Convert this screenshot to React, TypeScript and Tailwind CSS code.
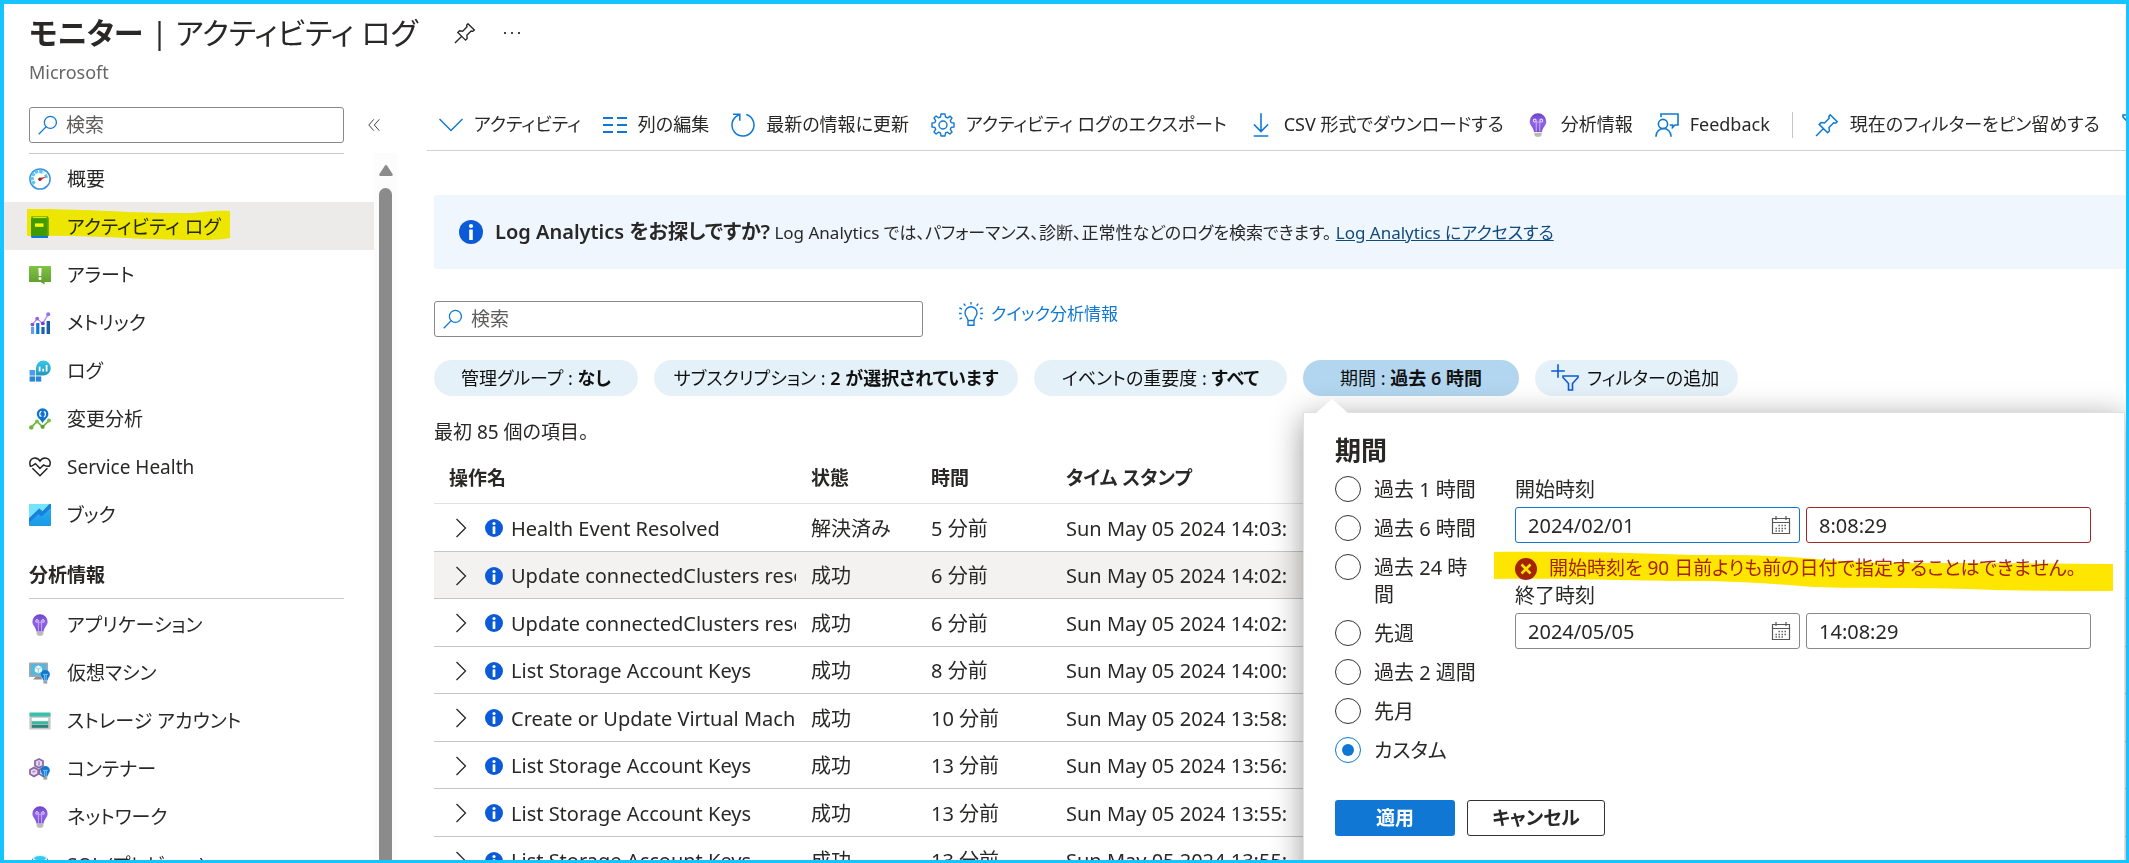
import React from "react";

type IconProps = { className?: string };

const stroke = { fill: "none", stroke: "currentColor", strokeLinecap: "square" as const };

const PinIcon = ({ className }: IconProps) => (
  <svg viewBox="0 0 24 24" className={className} {...stroke} strokeWidth="1.5" aria-hidden="true">
    <path d="M15.2 1.8 L22.2 8.8 L20.6 10.2 L18.7 9.8 L14 14.5 L14.4 18 L12.6 19.8 L4.2 11.4 L6 9.6 L9.5 10 L14.2 5.3 L13.8 3.4 Z M8.2 15.8 L1.6 22.4" />
  </svg>
);

const SearchIcon = ({ className }: IconProps) => (
  <svg viewBox="0 0 20 20" className={className} {...stroke} strokeWidth="1.3" aria-hidden="true">
    <circle cx="12.4" cy="7.4" r="6" />
    <path d="M8 11.8 L1.2 18.8" />
  </svg>
);

const CollapseIcon = ({ className }: IconProps) => (
  <svg viewBox="0 0 12 12" className={className} {...stroke} strokeWidth="1" aria-hidden="true">
    <path d="M5.5 0.7 L0.8 6 L5.5 11.3 M11 0.7 L6.3 6 L11 11.3" />
  </svg>
);

const ChevronDown = ({ className }: IconProps) => (
  <svg viewBox="0 0 24 24" className={className} {...stroke} strokeWidth="1.5" aria-hidden="true">
    <path d="M1 6.5 L12 17.5 L23 6.5" />
  </svg>
);

const ColumnsIcon = ({ className }: IconProps) => (
  <svg viewBox="0 0 24 24" className={className} fill="none" stroke="currentColor" strokeWidth="2" aria-hidden="true">
    <path d="M0 5H10M14 5H24M0 12H10M14 12H24M0 19H10M14 19H24" />
  </svg>
);

const RefreshIcon = ({ className }: IconProps) => (
  <svg viewBox="0 0 24 24" className={className} {...stroke} strokeWidth="1.5" aria-hidden="true">
    <path d="M7.5 2 A11 11 0 1 0 16 1.8 M2.8 1.2 H8.8 V7" />
  </svg>
);

const GearIcon = ({ className }: IconProps) => (
  <svg viewBox="0 0 24 24" className={className} fill="none" stroke="currentColor" strokeWidth="1.4" strokeLinejoin="round" aria-hidden="true">
    <path d="M10 1 H14 L14.5 4 L16.6 4.9 L19.2 3.2 L21 5.2 L19.3 7.6 L20.1 9.6 L23 10 V14 L20.1 14.4 L19.3 16.4 L21 18.9 L18.9 21 L16.5 19.2 L14.5 20 L14 23 H10 L9.5 20 L7.5 19.2 L5.1 21 L3 18.9 L4.7 16.4 L3.9 14.4 L1 14 V10 L3.9 9.6 L4.7 7.6 L3 5.1 L5.1 3 L7.5 4.8 L9.5 4 Z" />
    <circle cx="12" cy="12" r="4" />
  </svg>
);

const DownloadIcon = ({ className }: IconProps) => (
  <svg viewBox="0 0 24 24" className={className} {...stroke} strokeWidth="1.6" aria-hidden="true">
    <path d="M12 1 V18 M5.5 12 L12 18.5 L18.5 12 M5.5 23 H18.5" />
  </svg>
);

const FeedbackIcon = ({ className }: IconProps) => (
  <svg viewBox="0 0 24 24" className={className} {...stroke} strokeWidth="1.6" aria-hidden="true">
    <circle cx="8" cy="11" r="4.6" />
    <path d="M1 23 A7.5 7.5 0 0 1 16 23 M6 3.5 V1 H23 V12 H20 L17.5 14.5 V12 H15.5" />
  </svg>
);

const FilterIcon = ({ className }: IconProps) => (
  <svg viewBox="0 0 24 24" className={className} {...stroke} strokeWidth="1.6" aria-hidden="true">
    <path d="M1 2 H23 V4 L14.5 13 V22 H9.5 V13 L1 4 Z" />
  </svg>
);

const AddFilterIcon = ({ className }: IconProps) => (
  <svg viewBox="0 0 28 28" className={className} {...stroke} strokeWidth="1.6" aria-hidden="true">
    <path d="M7 1 V13 M1 7 H13" />
    <path d="M12 12 H27 V13.5 L21.5 19.5 V26 H17.5 V19.5 L12 13.5 Z" />
  </svg>
);

const IdeaIcon = ({ className }: IconProps) => (
  <svg viewBox="0 0 24 24" className={className} {...stroke} strokeWidth="1.4" aria-hidden="true">
    <path d="M9 18.5 C9 16 6 14.5 6 10.8 A6 6 0 0 1 18 10.8 C18 14.5 15 16 15 18.5 Z M9 18.5 V23.3 H15 V18.5 M12 0.6 V1.8 M5.2 2.2 L6 3.4 M18.8 2.2 L18 3.4 M1 6.2 L2.4 6.8 M23 6.2 L21.6 6.8 M0.7 11.5 H2 M23.3 11.5 H22 M1.2 16.8 L2.4 16.2 M22.8 16.8 L21.6 16.2" />
  </svg>
);

const ChevronRight = ({ className }: IconProps) => (
  <svg viewBox="0 0 12 20" className={className} fill="none" stroke="currentColor" strokeWidth="1.3" aria-hidden="true">
    <path d="M1.5 1 L10.5 10 L1.5 19" />
  </svg>
);

const InfoIcon = ({ className }: IconProps) => (
  <svg viewBox="0 0 24 24" className={className} aria-hidden="true">
    <circle cx="12" cy="12" r="12" fill="#0b5bd8" />
    <circle cx="12" cy="6" r="2.1" fill="#fff" />
    <rect x="10.2" y="9.6" width="3.6" height="10.4" rx="0.6" fill="#fff" />
  </svg>
);

const ErrorIcon = ({ className }: IconProps) => (
  <svg viewBox="0 0 22 22" className={className} aria-hidden="true">
    <circle cx="11" cy="11" r="11" fill="#a4262c" />
    <path d="M6.5 6.5 L15.5 15.5 M15.5 6.5 L6.5 15.5" stroke="#fff" strokeWidth="2.6" />
  </svg>
);

const CalendarIcon = ({ className }: IconProps) => (
  <svg viewBox="0 0 20 20" className={className} fill="none" stroke="currentColor" aria-hidden="true">
    <path d="M1.5 3.5 H18.5 V18.5 H1.5 Z M1.5 7.5 H18.5 M5 1 V5 M15 1 V5" strokeWidth="1.2" />
    <path d="M7.5 10.5 H16.5 M4.5 13.5 H16.5 M4.5 16 H13.5" strokeDasharray="1.4 1.6" strokeWidth="1.6" />
  </svg>
);

const BulbIcon = ({ className }: IconProps) => (
  <svg viewBox="0 0 22 22" className={className} aria-hidden="true">
    <defs>
      <linearGradient id="bulb" x1="0" y1="0" x2="0" y2="1">
        <stop offset="0" stopColor="#6a43c4" />
        <stop offset="0.5" stopColor="#9163e6" />
        <stop offset="1" stopColor="#7750d0" />
      </linearGradient>
    </defs>
    <path d="M11 0.3 A7.6 7.4 0 0 1 18.6 7.7 C18.6 11.5 15.2 12.8 14.6 17.4 H7.4 C6.8 12.8 3.4 11.5 3.4 7.7 A7.6 7.4 0 0 1 11 0.3 Z" fill="url(#bulb)" />
    <path d="M9.4 17 V8.2 M12.6 17 V8.2 M9.4 8.2 H12.6" stroke="#c9a9f7" strokeWidth="1" fill="none" />
    <circle cx="8" cy="6.9" r="1.3" stroke="#e6d6ff" strokeWidth="1" fill="none" />
    <circle cx="14" cy="6.9" r="1.3" stroke="#e6d6ff" strokeWidth="1" fill="none" />
    <path d="M7.6 18 H14.4 V20 L13 21.8 H9 L7.6 20 Z" fill="#b9b9b9" />
  </svg>
);

const MiniBulb = () => (
  <g>
    <path d="M16.3 8 A4.6 4.6 0 0 1 20.9 12.6 C20.9 15 18.8 15.8 18.5 18.4 H14.1 C13.8 15.8 11.7 15 11.7 12.6 A4.6 4.6 0 0 1 16.3 8 Z" fill="#0f78d4" />
    <path d="M15.4 18 V13 M17.2 18 V13 M13.8 12.4 H18.8" stroke="#9fd4f7" strokeWidth="0.8" fill="none" />
    <rect x="14.4" y="19" width="3.8" height="2.6" fill="#a0a0a0" />
  </g>
);

const GaugeIcon = ({ className }: IconProps) => (
  <svg viewBox="0 0 22 22" className={className} aria-hidden="true">
    <circle cx="11" cy="11" r="10.1" fill="#fff" stroke="#3b8fe0" strokeWidth="1.5" />
    <path d="M5.6 15.8 A7 7 0 0 1 14.6 5" fill="none" stroke="#5ac8ee" strokeWidth="3.4" strokeDasharray="3.3 0.9" />
    <path d="M16.2 6.6 A7 7 0 0 1 17.6 10" fill="none" stroke="#5ac8ee" strokeWidth="3" />
    <path d="M10.4 10 L17.6 8.4 L11.4 12.4 Z" fill="#e8302a" />
    <circle cx="10.9" cy="11.2" r="1.7" fill="#8a2b2b" />
  </svg>
);

const BookIcon = ({ className }: IconProps) => (
  <svg viewBox="0 0 22 22" className={className} aria-hidden="true">
    <path d="M2 1.4 Q2 0 3.6 0 H19 V3 H2 Z" fill="#76bc2d" />
    <path d="M4 0.8 H18 V2.2 H4 Z" fill="#d7ecc0" />
    <path d="M2 2.2 H19.5 V20 H4 Q2 20 2 21 Z" fill="#3f9c12" />
    <path d="M17.6 1 H19.5 V20 H17.6 Z" fill="#5aa51f" />
    <rect x="6" y="7.4" width="8.5" height="3.4" fill="#fff" />
    <path d="M2 20 H19 V22 H3 Q2 22 2 20 Z" fill="#0b7ad1" />
  </svg>
);

const AlertIcon = ({ className }: IconProps) => (
  <svg viewBox="0 0 22 22" className={className} aria-hidden="true">
    <defs>
      <linearGradient id="alert" x1="0" y1="0" x2="0" y2="1">
        <stop offset="0" stopColor="#7fc443" />
        <stop offset="1" stopColor="#5e9b2f" />
      </linearGradient>
    </defs>
    <path d="M0.5 2 H21.5 Q22 2 22 2.5 V18 H15.5 V20.6 L11.5 18 H0 V2.5 Z" fill="url(#alert)" />
    <path d="M9.4 4 H12.6 L12.2 12 H9.8 Z" fill="#fff" />
    <circle cx="11" cy="14.4" r="1.5" fill="#fff" />
  </svg>
);

const MetricsIcon = ({ className }: IconProps) => (
  <svg viewBox="0 0 22 22" className={className} aria-hidden="true">
    <rect x="2" y="15" width="3.2" height="7" fill="#5ea0ef" />
    <rect x="7.2" y="11" width="3.2" height="11" fill="#0f78d4" />
    <rect x="12.4" y="15" width="3.2" height="7" fill="#1c5fae" />
    <rect x="17.6" y="9" width="3.4" height="13" fill="#175ea8" />
    <path d="M3.4 12.4 L8.2 6.8 L13.8 11.4 L19.2 2.4" fill="none" stroke="#b58af0" strokeWidth="1.3" />
    <circle cx="3.4" cy="12.6" r="1.9" fill="#8b4fe0" />
    <circle cx="8.2" cy="6.6" r="1.9" fill="#9a5fe6" />
    <circle cx="13.8" cy="11.4" r="1.9" fill="#7a3bdc" />
    <circle cx="19.2" cy="2.2" r="2" fill="#a06ae8" />
  </svg>
);

const LogsIcon = ({ className }: IconProps) => (
  <svg viewBox="0 0 22 22" className={className} aria-hidden="true">
    <defs>
      <linearGradient id="logs" x1="0" y1="0" x2="0" y2="1">
        <stop offset="0" stopColor="#35c9ec" />
        <stop offset="1" stopColor="#2497b8" />
      </linearGradient>
    </defs>
    <rect x="0.6" y="10" width="5.6" height="5.6" fill="#4a9cec" />
    <rect x="0.6" y="16.4" width="5.6" height="5.2" fill="#2a84dc" />
    <rect x="7" y="16.4" width="5.2" height="5.2" fill="#2a84dc" />
    <path d="M14.4 0.6 A7.4 7.4 0 1 1 14.4 15.4 H7 V8 A7.4 7.4 0 0 1 14.4 0.6 Z" fill="url(#logs)" />
    <path d="M10.6 6.6 V11.6 M14.2 8.8 V11.6 M17.6 5 V11.6" stroke="#fff" strokeWidth="1.8" />
  </svg>
);

const ChangeIcon = ({ className }: IconProps) => (
  <svg viewBox="0 0 22 22" className={className} aria-hidden="true">
    <path d="M2.2 19.4 L8 13.4 L13.6 18.8 L20 12.6" fill="none" stroke="#6fb83a" strokeWidth="1.8" />
    <circle cx="2.3" cy="19.4" r="2.2" fill="#6cb536" />
    <circle cx="8" cy="13.4" r="2" fill="#76c13f" />
    <circle cx="13.6" cy="18.8" r="2.1" fill="#5ea32c" />
    <circle cx="20" cy="12.6" r="2" fill="#76c13f" />
    <path d="M13.6 0.2 A5.8 5.8 0 0 1 19.4 6 C19.4 9.6 15.6 11.4 13.6 15 C11.6 11.4 7.8 9.6 7.8 6 A5.8 5.8 0 0 1 13.6 0.2 Z" fill="#1272cf" />
    <path d="M12.4 3.2 A3 3 0 0 0 11.6 8 M14.8 9 A3 3 0 0 0 15.6 4.2 M10.4 7.4 L12.4 8.6 M16.8 4.8 L14.8 3.6" fill="none" stroke="#fff" strokeWidth="1.2" />
  </svg>
);

const HealthIcon = ({ className }: IconProps) => (
  <svg viewBox="0 0 22 22" className={className} fill="none" stroke="#222" strokeWidth="1.5" aria-hidden="true">
    <path d="M1.4 10.2 C-0.2 5.6 2 2 5.8 2 C8 2 9.8 3 11 5 C12.2 3 14 2 16.2 2 C20 2 22.4 5.8 20.6 9.8 M3.4 12.2 L11 19.8 L18.4 12.2" />
    <path d="M1 10.2 C3 11 4.6 8.6 6.4 7.6 L11 12.4 C12.4 11.4 13.4 9.8 14.8 9 C16.4 10.4 18.6 10.6 21 9.8" />
  </svg>
);

const WorkbookIcon = ({ className }: IconProps) => (
  <svg viewBox="0 0 22 22" className={className} aria-hidden="true">
    <defs>
      <linearGradient id="wb" x1="0" y1="0" x2="0" y2="1">
        <stop offset="0" stopColor="#2bb3ee" />
        <stop offset="1" stopColor="#1a98e8" />
      </linearGradient>
    </defs>
    <rect width="22" height="22" rx="0.8" fill="url(#wb)" />
    <path d="M0.8 0 H20.6 L13.6 7.4 L10.2 4.8 L0 14.6 V0.8 Z" fill="#74e3fb" />
    <path d="M20.6 0 H22 V4 L12.6 12.6 L9.2 10 L0 19 V14.2 L10.2 4.6 L13.6 7.2 Z" fill="#1b80dc" />
  </svg>
);

const VmIcon = ({ className }: IconProps) => (
  <svg viewBox="0 0 22 22" className={className} aria-hidden="true">
    <rect x="0" y="0.4" width="19" height="14.6" rx="0.8" fill="#a5a8aa" />
    <rect x="1.6" y="2" width="15.8" height="11.4" fill="#55b7dc" />
    <path d="M9.4 3.2 L13 5.2 V9.4 L9.4 11.6 L5.8 9.4 V5.2 Z" fill="#eaf8fd" />
    <path d="M5.8 5.2 L9.4 7.2 L13 5.2 M9.4 7.2 V11.6" stroke="#7fc9e6" strokeWidth="0.8" fill="none" />
    <path d="M6.6 15 H12.4 L13 17.4 H4 Z" fill="#8b8e90" />
    <MiniBulb />
  </svg>
);

const StorageIcon = ({ className }: IconProps) => (
  <svg viewBox="0 0 22 22" className={className} aria-hidden="true">
    <rect x="0.4" y="6" width="21.2" height="13.6" rx="0.8" fill="#c4c6c7" />
    <path d="M0.4 6.4 V3 Q0.4 2.4 1 2.4 H21 Q21.6 2.4 21.6 3 V6.4 Z" fill="#3dbfae" />
    <rect x="2.8" y="7.8" width="16.4" height="3" fill="#fff" />
    <rect x="2.8" y="11.4" width="16.4" height="2.6" fill="#35b8a6" />
    <rect x="2.8" y="14.8" width="16.4" height="3" fill="#23857a" />
  </svg>
);

const ContainerIcon = ({ className }: IconProps) => (
  <svg viewBox="0 0 22 22" className={className} aria-hidden="true">
    <g fill="#e7dcef" stroke="#8a6aa6" strokeWidth="1.8" strokeLinejoin="round">
      <path d="M10 1 L14 3 V7.6 L10 9.8 L6 7.6 V3 Z" />
      <path d="M5 9.6 L9.2 11.8 V16 L5 18.4 L1 16 V11.8 Z" />
      <path d="M14.4 9.6 L18.4 11.8 V16 L14.4 18.4 L10.4 16 V11.8 Z" />
    </g>
    <path d="M10 3.6 V7.4 M3.6 14 L6.4 13" stroke="#a98bc2" strokeWidth="1.6" />
    <MiniBulb />
  </svg>
);

const SqlIcon = ({ className }: IconProps) => (
  <svg viewBox="0 0 22 22" className={className} aria-hidden="true">
    <path d="M3 4 V18 C3 23 19 23 19 18 V4 Z" fill="#0f78d4" />
    <ellipse cx="11" cy="4" rx="8" ry="3.4" fill="#e6f6fd" />
    <ellipse cx="11" cy="4.2" rx="6" ry="2.2" fill="#35c9ec" />
  </svg>
);

type NavItem = { label: string; Icon: React.FC<IconProps>; active?: boolean };

const monitorItems: NavItem[] = [
  { label: "概要", Icon: GaugeIcon },
  { label: "アクティビティ ログ", Icon: BookIcon, active: true },
  { label: "アラート", Icon: AlertIcon },
  { label: "メトリック", Icon: MetricsIcon },
  { label: "ログ", Icon: LogsIcon },
  { label: "変更分析", Icon: ChangeIcon },
  { label: "Service Health", Icon: HealthIcon },
  { label: "ブック", Icon: WorkbookIcon },
];

const insightItems: NavItem[] = [
  { label: "アプリケーション", Icon: BulbIcon },
  { label: "仮想マシン", Icon: VmIcon },
  { label: "ストレージ アカウント", Icon: StorageIcon },
  { label: "コンテナー", Icon: ContainerIcon },
  { label: "ネットワーク", Icon: BulbIcon },
  { label: "SQL (プレビュー)", Icon: SqlIcon },
];

const NavRow = ({ label, Icon, active }: NavItem) => (
  <li>
    <a
      href="#"
      aria-current={active ? "page" : undefined}
      className={`relative flex h-12 items-center gap-4 pt-0.5 pl-[25px] ${active ? "bg-[#ecebe9]" : ""}`}
    >
      <Icon className="size-[22px] shrink-0" />
      <span className="whitespace-nowrap">{label}</span>
      {active && (
        <svg viewBox="0 0 204 32" className="absolute top-1.5 left-[22px] h-8 w-[204px] mix-blend-multiply" aria-hidden="true">
          <path d="M1 1 C50 0 120 6 165 5 C180 4 190 2 204 3 V30 C190 33 160 32 120 31 C80 29 40 27 1 28 Z" fill="#fffa00" />
        </svg>
      )}
    </a>
  </li>
);

const Tool = ({ label, Icon }: { label: string; Icon: React.FC<IconProps> }) => (
  <button type="button" className="flex shrink-0 items-center gap-[11px]">
    <Icon className="size-6 shrink-0 text-[#1078d4]" />
    <span className="whitespace-nowrap">{label}</span>
  </button>
);

const Pill = ({ name, value, className }: { name: string; value: string; className: string }) => (
  <button type="button" className={`h-9 shrink-0 rounded-full text-[18px] whitespace-nowrap text-[#111] ${className}`}>
    {name} : <b className="font-semibold">{value}</b>
  </button>
);

const rows = [
  ["Health Event Resolved", "解決済み", "5 分前", "Sun May 05 2024 14:03:"],
  ["Update connectedClusters reso", "成功", "6 分前", "Sun May 05 2024 14:02:"],
  ["Update connectedClusters reso", "成功", "6 分前", "Sun May 05 2024 14:02:"],
  ["List Storage Account Keys", "成功", "8 分前", "Sun May 05 2024 14:00:"],
  ["Create or Update Virtual Mach", "成功", "10 分前", "Sun May 05 2024 13:58:"],
  ["List Storage Account Keys", "成功", "13 分前", "Sun May 05 2024 13:56:"],
  ["List Storage Account Keys", "成功", "13 分前", "Sun May 05 2024 13:55:"],
  ["List Storage Account Keys", "成功", "13 分前", "Sun May 05 2024 13:55:"],
];

const ranges = ["過去 1 時間", "過去 6 時間", "過去 24 時間", "先週", "過去 2 週間", "先月", "カスタム"];

const DateTimeFields = ({ id, label, date, time, dateBorder, timeBorder }: {
  id: string; label: string; date: string; time: string; dateBorder: string; timeBorder: string;
}) => (
  <div>
    <label htmlFor={id} className="block leading-[27px]">{label}</label>
    <div className="mt-1 grid grid-cols-2 gap-1.5">
      <div className={`flex h-9 items-center rounded-[3px] border pr-2 pl-3 ${dateBorder}`}>
        <input id={id} defaultValue={date} className="w-full min-w-0 outline-none" />
        <button type="button" aria-label="カレンダー"><CalendarIcon className="size-5 text-[#555]" /></button>
      </div>
      <input aria-label={`${label} (時間)`} defaultValue={time} className={`h-9 w-full rounded-[3px] border px-3 outline-none ${timeBorder}`} />
    </div>
  </div>
);

const RangePopup = () => (
  <div role="dialog" aria-label="期間" className="absolute top-full left-0 z-10 mt-4 h-[500px] w-[822px] border border-[#e1e1e1] bg-white pt-4 pr-[33px] pl-[31px] text-left text-[20px] shadow-[0_6px_30px_rgba(0,0,0,0.4)]">
    <svg viewBox="0 0 32 14" className="absolute -top-[14px] left-3 h-[14px] w-8" aria-hidden="true">
      <path d="M0 14 L16 0 L32 14 Z" fill="#fff" />
    </svg>
    <h2 className="text-[26px] leading-[42px] font-semibold">期間</h2>
    <div className="mt-[5px] flex gap-9">
      <fieldset className="flex w-36 shrink-0 flex-col gap-3">
        <legend className="sr-only">期間</legend>
        {ranges.map((range) => (
          <label key={range} className="flex gap-[13px] leading-[27px]">
            <input
              type="radio"
              name="range"
              defaultChecked={range === "カスタム"}
              className="size-[26px] shrink-0 appearance-none rounded-full border border-[#333] bg-clip-content p-1.5 checked:border-[#1078d4] checked:bg-[#1078d4]"
            />
            <span>{range}</span>
          </label>
        ))}
      </fieldset>
      <div className="flex-1">
        <DateTimeFields id="start" label="開始時刻" date="2024/02/01" time="8:08:29" dateBorder="border-[#1078d4]" timeBorder="border-[#a4262c]" />
        <p role="alert" className="relative mt-3 flex items-center gap-3 text-[19px] text-[#a4262c]">
          <ErrorIcon className="size-[22px] shrink-0" />
          <span className="leading-[27px] whitespace-nowrap">開始時刻を 90 日前よりも前の日付で指定することはできません。</span>
          <svg viewBox="0 0 619 41" className="absolute -top-1 -left-[21px] h-[41px] w-[619px] mix-blend-multiply" aria-hidden="true">
            <path d="M0 1 C110 0 150 3 200 4 C240 4 280 4 310 7 C370 13 430 12 480 12 L619 13 V40 C580 40 540 40 500 39 C430 36 370 38 320 36 C270 32 240 30 190 30 C120 30 90 27 0 28 Z" fill="#ffe600" />
          </svg>
        </p>
        <DateTimeFields id="end" label="終了時刻" date="2024/05/05" time="14:08:29" dateBorder="border-[#8a8886]" timeBorder="border-[#8a8886]" />
      </div>
    </div>
    <div className="mt-9 flex gap-3 text-[19px] font-semibold">
      <button type="button" className="h-9 w-[120px] rounded-[3px] bg-[#1078d4] text-white">適用</button>
      <button type="button" className="h-9 w-[138px] rounded-[3px] border border-[#333]">キャンセル</button>
    </div>
  </div>
);

export default function App() {
  return (
    <div className="flex h-screen flex-col overflow-hidden border-t-4 border-r-[3px] border-b-[3px] border-l-4 border-[#16c4ff] bg-white font-['Noto_Sans','Noto_Sans_CJK_JP',sans-serif] text-[19px] leading-[27px] text-[#292827] [font-feature-settings:'palt']">
      <header className="shrink-0 pl-[25px]">
        <div className="flex h-[58px] items-center">
          <h1 className="text-[30px] leading-[46px] whitespace-nowrap">
            <b className="font-semibold">モニター</b> | アクティビティ ログ
          </h1>
          <button type="button" aria-label="ピン留め" className="ml-9"><PinIcon className="size-[22px]" /></button>
          <button type="button" aria-label="その他" className="ml-7 flex gap-[5px]">
            <i className="size-0.5 bg-[#444]" /><i className="size-0.5 bg-[#444]" /><i className="size-0.5 bg-[#444]" />
          </button>
        </div>
        <p className="text-[18px] leading-[20px] text-[#666]">Microsoft</p>
      </header>

      <div className="flex min-h-0 flex-1">
        <aside className="flex w-[423px] shrink-0 flex-col pt-[25px]">
          <div className="flex items-center pb-[10px] pl-[25px]">
            <div className="flex h-9 w-[315px] items-center gap-2 rounded-[3px] border border-[#8a8886] px-2">
              <SearchIcon className="size-5 shrink-0 text-[#1078d4]" />
              <input aria-label="メニューの検索" placeholder="検索" className="w-full min-w-0 outline-none placeholder:text-[#605e5c]" />
            </div>
            <button type="button" aria-label="折りたたむ" className="ml-6"><CollapseIcon className="size-3 text-[#444]" /></button>
          </div>
          <div className="flex min-h-0 flex-1">
            <nav className="w-[370px] overflow-hidden">
              <hr className="ml-[25px] w-[315px] border-[#c8c8c8]" />
              <ul>{monitorItems.map((item) => <NavRow key={item.label} {...item} />)}</ul>
              <h2 className="ml-[25px] flex h-[61px] w-[315px] items-center border-b border-[#c8c8c8] pt-3.5 font-semibold">
                分析情報
              </h2>
              <ul className="pt-px">{insightItems.map((item) => <NavRow key={item.label} {...item} />)}</ul>
            </nav>
            <div className="flex w-[23px] flex-col items-center bg-[#fcfcfc] pt-3" aria-hidden="true">
              <svg viewBox="0 0 14 11" className="h-[11px] w-3.5 shrink-0"><path d="M6 0.6 Q7 -0.4 8 0.6 L13.6 9 Q14 11 12.6 11 H1.4 Q0 11 0.4 9 Z" fill="#8b8b8b" /></svg>
              <div className="mt-3 w-[13px] flex-1 rounded-t-full bg-[#8b8b8b]" />
            </div>
          </div>
        </aside>

        <main className="flex min-w-0 flex-1 flex-col overflow-hidden">
          <div className="flex h-[69px] shrink-0 items-center gap-[22px] border-b border-[#d2d0ce] pt-[17px] pl-3 text-[18px]">
            <Tool label="アクティビティ" Icon={ChevronDown} />
            <Tool label="列の編集" Icon={ColumnsIcon} />
            <Tool label="最新の情報に更新" Icon={RefreshIcon} />
            <Tool label="アクティビティ ログのエクスポート" Icon={GearIcon} />
            <Tool label="CSV 形式でダウンロードする" Icon={DownloadIcon} />
            <Tool label="分析情報" Icon={BulbIcon} />
            <Tool label="Feedback" Icon={FeedbackIcon} />
            <div className="h-[26px] w-px shrink-0 bg-[#c8c6c4]" />
            <Tool label="現在のフィルターをピン留めする" Icon={PinIcon} />
            <button type="button" aria-label="フィルター" className="shrink-0">
              <FilterIcon className="size-6 text-[#1078d4]" />
            </button>
          </div>

          <div className="mt-11 ml-[7px] flex h-[74px] shrink-0 items-center rounded-l-[3px] bg-[#eff6fe] pl-[25px]">
            <InfoIcon className="size-6 shrink-0" />
            <p className="ml-3 text-[17px] whitespace-nowrap">
              <b className="text-[20px] font-semibold">Log Analytics をお探しですか?</b>{" "}
              Log Analytics では、パフォーマンス、診断、正常性などのログを検索できます。{" "}
              <a href="#" className="text-[#0f4a7e] underline">Log Analytics にアクセスする</a>
            </p>
          </div>

          <div className="mt-8 ml-[7px] flex shrink-0 items-start">
            <div className="flex h-9 w-[489px] items-center gap-2 rounded-[3px] border border-[#8a8886] px-2">
              <SearchIcon className="size-5 shrink-0 text-[#1078d4]" />
              <input aria-label="ログの検索" placeholder="検索" className="w-full min-w-0 outline-none placeholder:text-[#605e5c]" />
            </div>
            <a href="#" className="ml-9 flex items-center gap-2 text-[17px] leading-[26px] whitespace-nowrap text-[#1078d4]">
              <IdeaIcon className="size-6" />
              クイック分析情報
            </a>
          </div>

          <div className="mt-[23px] ml-[7px] flex shrink-0 gap-4">
            <Pill name="管理グループ" value="なし" className="w-[204px] bg-[#e4f1f9]" />
            <Pill name="サブスクリプション" value="2 が選択されています" className="w-[364px] bg-[#e4f1f9]" />
            <Pill name="イベントの重要度" value="すべて" className="w-[253px] bg-[#e4f1f9]" />
            <div className="relative">
              <Pill name="期間" value="過去 6 時間" className="w-[216px] bg-[#b2d6ef]" />
              <RangePopup />
            </div>
            <button type="button" className="flex h-9 w-[203px] shrink-0 items-center gap-2 rounded-full bg-[#e4f1f9] pl-4 text-[18px] whitespace-nowrap text-[#111]">
              <AddFilterIcon className="size-7 shrink-0 text-[#0b5bd8]" />
              フィルターの追加
            </button>
          </div>

          <p className="mt-[23px] ml-[7px] shrink-0">最初 85 個の項目。</p>
          <div className="mt-[5px] pl-[7px]">
            <table className="w-full table-fixed border-collapse text-left text-[20px] whitespace-nowrap">
              <colgroup>
                <col className="w-[362px]" />
                <col className="w-[120px]" />
                <col className="w-[135px]" />
                <col />
              </colgroup>
              <thead>
                <tr className="h-[52px] border-b border-[#e1e1e1] text-[19px]">
                  <th className="pt-1 pl-[15px] font-semibold">操作名</th>
                  <th className="pt-1 pl-[15px] font-semibold">状態</th>
                  <th className="pt-1 pl-[15px] font-semibold">時間</th>
                  <th className="pt-1 pl-[15px] font-semibold">タイム スタンプ</th>
                </tr>
              </thead>
              <tbody>
                {rows.map(([name, status, ago, stamp], i) => (
                  <tr key={i} className={`border-b border-[#c8c6c4] odd:h-12 even:h-[47px] ${i === 1 ? "bg-[#f3f2f1]" : ""}`}>
                    <td className="overflow-hidden pt-0.5 pl-[21px]">
                      <div className="flex items-center overflow-hidden">
                        <button type="button" aria-label="展開" className="shrink-0"><ChevronRight className="h-5 w-3" /></button>
                        <InfoIcon className="ml-[18px] size-[18px] shrink-0" />
                        <span className="ml-2">{name}</span>
                      </div>
                    </td>
                    <td className="pt-0.5 pl-[15px]">{status}</td>
                    <td className="pt-0.5 pl-[15px]">{ago}</td>
                    <td className="pt-0.5 pl-[15px]">{stamp}</td>
                  </tr>
                ))}
              </tbody>
            </table>
          </div>
        </main>
      </div>
    </div>
  );
}
